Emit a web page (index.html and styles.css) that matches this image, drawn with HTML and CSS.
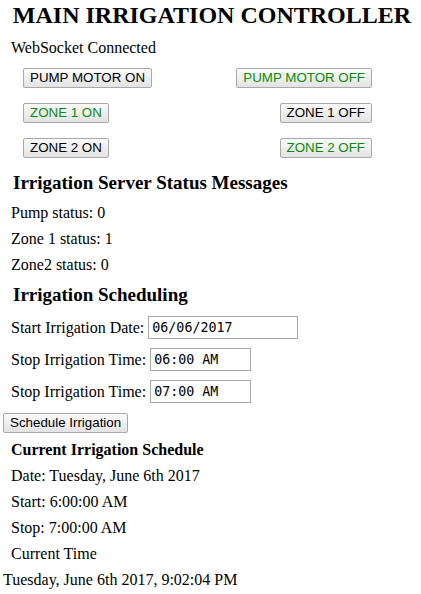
FILE: index.html
```html
<!DOCTYPE html>
<html>
<head>
<meta charset="utf-8">
<title>Main Irrigation Controller</title>
<link rel="stylesheet" href="styles.css">
</head>
<body>
<h1 class="title">MAIN IRRIGATION CONTROLLER</h1>
<p class="line">WebSocket Connected</p>
<div class="controls">
  <button class="btn">PUMP MOTOR ON</button>
  <button class="btn btn-right on">PUMP MOTOR OFF</button>
  <button class="btn on">ZONE 1 ON</button>
  <button class="btn btn-right">ZONE 1 OFF</button>
  <button class="btn">ZONE 2 ON</button>
  <button class="btn btn-right on">ZONE 2 OFF</button>
</div>
<h3 class="section first">Irrigation Server Status Messages</h3>
<p class="line">Pump status: 0</p>
<p class="line">Zone 1 status: 1</p>
<p class="line">Zone2 status: 0</p>
<h3 class="section">Irrigation Scheduling</h3>
<div class="form">
  <div class="row"><label class="lbl">Start Irrigation Date:</label><input class="field date" type="text" value="06/06/2017"></div>
  <div class="row"><label class="lbl">Stop Irrigation Time:</label><input class="field time" type="text" value="06:00 AM"></div>
  <div class="row"><label class="lbl">Stop Irrigation Time:</label><input class="field time" type="text" value="07:00 AM"></div>
</div>
<button class="btn schedule">Schedule Irrigation</button>
<p class="line strong">Current Irrigation Schedule</p>
<p class="line">Date: Tuesday, June 6th 2017</p>
<p class="line">Start: 6:00:00 AM</p>
<p class="line">Stop: 7:00:00 AM</p>
<p class="line">Current Time</p>
<p class="line flush">Tuesday, June 6th 2017, 9:02:04 PM</p>
</body>
</html>
```

FILE: styles.css
```css
html, body {
  background: #ffffff;
}
body {
  margin: 0;
  padding: 0 3px;
  font-family: "Liberation Serif", "Times New Roman", serif;
  font-size: 16px;
  color: #000;
}
.title {
  margin: 0 0 5px 0;
  padding: 1px 0 0 3px;
  font-size: 24px;
  line-height: 29px;
  font-weight: bold;
  text-align: center;
}
.line {
  margin: 0;
  padding: 4px 8px;
  line-height: 18px;
}
.line.strong {
  font-weight: bold;
  margin-top: 4px;
}
.line.flush {
  padding-left: 0;
}
.controls {
  display: grid;
  grid-template-columns: 1fr 1fr;
  row-gap: 15px;
  margin: 7px 0 0 20px;
  width: 349px;
}
.btn {
  font-family: "Liberation Sans", Arial, sans-serif;
  font-size: 13.33px;
  line-height: 16px;
  height: 20px;
  padding: 1px 6px;
  border: 1px solid #a9a9a9;
  border-radius: 2px;
  background: linear-gradient(#fbfbfb, #e3e3e3);
  color: #000;
  justify-self: start;
  box-sizing: border-box;
}
.btn.on {
  color: #0a8a0a;
}
.btn-right {
  justify-self: end;
}
.section {
  margin: 6px 0 6px 0;
  padding-left: 10px;
  font-size: 19px;
  line-height: 22px;
  font-weight: bold;
}
.section.first {
  margin-top: 14px;
}
.form {
  display: flex;
  flex-direction: column;
  gap: 9px;
  margin-top: 10px;
}
.row {
  display: flex;
  align-items: center;
  gap: 4px;
  height: 23px;
  padding-left: 8px;
}
.lbl {
  line-height: 18px;
}
.field {
  box-sizing: border-box;
  height: 23px;
  border: 1px solid #a9a9a9;
  padding: 0 3px;
  font-family: "DejaVu Sans Mono", monospace;
  font-size: 13.33px;
  color: #000;
  background: #fff;
}
.field.date {
  width: 150px;
}
.field.time {
  width: 101px;
}
.schedule {
  margin-top: 10px;
  display: block;
}
```
